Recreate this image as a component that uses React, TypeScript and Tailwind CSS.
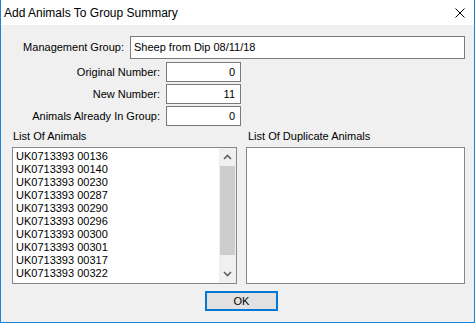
import React from "react";

const items = [
  "UK0713393 00136",
  "UK0713393 00140",
  "UK0713393 00230",
  "UK0713393 00287",
  "UK0713393 00290",
  "UK0713393 00296",
  "UK0713393 00300",
  "UK0713393 00301",
  "UK0713393 00317",
  "UK0713393 00322",
];

function NumRow({ label, value, mt }: { label: string; value: string; mt: string }) {
  return (
    <div className={`flex items-center ${mt}`}>
      <div className="w-[159px] text-right leading-[20px]">{label}</div>
      <div className="ml-[6px] w-[75px] h-[20px] bg-white border border-[#7a7a7a] text-right pr-[5px] leading-[18px]">
        {value}
      </div>
    </div>
  );
}

export default function App() {
  return (
    <div
      className="w-[475px] h-[323px] bg-[#f0f0f0] border-l border-r border-b border-[#1883d7] flex flex-col text-[11px] text-black"
      style={{ fontFamily: '"Liberation Sans", Arial, sans-serif' }}
    >
      <div className="h-[25px] bg-white flex items-center justify-between pl-[3px] pr-[9px] shrink-0">
        <span className="text-[12px] text-black">Add Animals To Group Summary</span>
        <svg width="10" height="10" viewBox="0 0 10 10">
          <path d="M0.5 0.5 L9.5 9.5 M9.5 0.5 L0.5 9.5" stroke="#000" strokeWidth="1" fill="none" />
        </svg>
      </div>

      <div className="flex items-center mt-[11px]">
        <div className="w-[123px] text-right leading-[23px]">Management Group:</div>
        <div className="ml-[6px] w-[335px] h-[23px] bg-white border border-[#7a7a7a] pl-[3px] leading-[21px]">
          Sheep from Dip 08/11/18
        </div>
      </div>
      <NumRow label="Original Number:" value="0" mt="mt-[3px]" />
      <NumRow label="New Number:" value="11" mt="mt-[2px]" />
      <NumRow label="Animals Already In Group:" value="0" mt="mt-[2px]" />

      <div className="flex mt-[4px] ml-[11px]">
        <div className="w-[225px] flex flex-col">
          <div className="h-[13px] leading-[13px] pl-[1px]">List Of Animals</div>
          <div className="mt-[4px] h-[137px] bg-white border border-[#828790] flex">
            <div className="flex-1 pt-[2px] pl-[3px]">
              {items.map((t) => (
                <div key={t} className="h-[13px] leading-[13px]">
                  {t}
                </div>
              ))}
            </div>
            <div className="w-[17px] bg-[#f0f0f0] flex flex-col">
              <div className="h-[18px] flex items-center justify-center">
                <svg width="9" height="6" viewBox="0 0 9 6">
                  <path d="M1 5 L4.5 1.5 L8 5" stroke="#606060" strokeWidth="1.6" fill="none" />
                </svg>
              </div>
              <div className="h-[89px] mx-[1px] bg-[#cdcdcd]" />
              <div className="flex-1 flex items-end justify-center pb-[6px]">
                <svg width="9" height="6" viewBox="0 0 9 6">
                  <path d="M1 1 L4.5 4.5 L8 1" stroke="#606060" strokeWidth="1.6" fill="none" />
                </svg>
              </div>
            </div>
          </div>
        </div>
        <div className="w-[219px] ml-[9px] flex flex-col">
          <div className="h-[13px] leading-[13px] pl-[2px]">List Of Duplicate Animals</div>
          <div className="mt-[4px] h-[137px] bg-white border border-[#828790]" />
        </div>
      </div>

      <div className="mt-[7px] ml-[204px] w-[73px] h-[20px] bg-[#e1e1e1] border-2 border-[#0078d7] flex items-center justify-center">
        OK
      </div>
    </div>
  );
}
